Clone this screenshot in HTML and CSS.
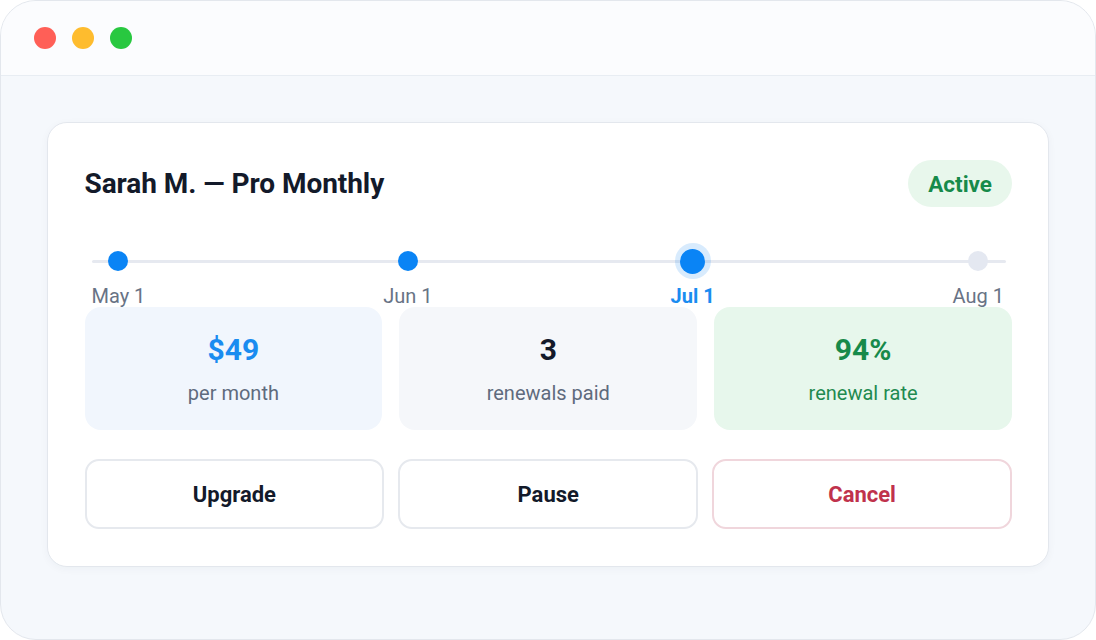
FILE: index.html
```html
<!DOCTYPE html>
<html lang="en">
<head>
<meta charset="utf-8">
<title>Subscription</title>
<link rel="stylesheet" href="styles.css">
</head>
<body>
<div class="window">
  <div class="titlebar">
    <span class="dot red"></span>
    <span class="dot yellow"></span>
    <span class="dot green"></span>
  </div>
  <div class="content">
    <div class="card">
      <div class="header">
        <h1 class="title">Sarah M. — Pro Monthly</h1>
        <span class="badge">Active</span>
      </div>
      <div class="timeline">
        <div class="track"></div>
        <div class="stop done"><span class="marker"></span><span class="label">May 1</span></div>
        <div class="stop done"><span class="marker"></span><span class="label">Jun 1</span></div>
        <div class="stop current"><span class="marker"></span><span class="label">Jul 1</span></div>
        <div class="stop future"><span class="marker"></span><span class="label">Aug 1</span></div>
      </div>
      <div class="stats">
        <div class="stat blue"><div class="value">$49</div><div class="caption">per month</div></div>
        <div class="stat gray"><div class="value">3</div><div class="caption">renewals paid</div></div>
        <div class="stat green"><div class="value">94%</div><div class="caption">renewal rate</div></div>
      </div>
      <div class="actions">
        <button class="btn">Upgrade</button>
        <button class="btn">Pause</button>
        <button class="btn danger">Cancel</button>
      </div>
    </div>
  </div>
</div>
</body>
</html>
```

FILE: styles.css
```css
* { box-sizing: border-box; }
html, body { margin: 0; padding: 0; }
body {
  width: 1096px;
  height: 640px;
  background: #ffffff;
  font-family: Roboto, "Liberation Sans", Arial, sans-serif;
  overflow: hidden;
}
.window {
  width: 1096px;
  height: 640px;
  border: 1.5px solid #e3e7ed;
  border-radius: 36px;
  background: #f5f8fc;
  overflow: hidden;
  display: flex;
  flex-direction: column;
}
.titlebar {
  height: 75px;
  flex: none;
  background: #fbfcfe;
  border-bottom: 1px solid #e8edf3;
  display: flex;
  align-items: center;
  gap: 16px;
  padding: 0 0 1px 33px;
}
.dot { width: 22px; height: 22px; border-radius: 50%; display: block; }
.dot.red { background: #ff5f57; }
.dot.yellow { background: #febc2e; }
.dot.green { background: #28c840; }
.content {
  padding: 46px 46px 0 45.5px;
}
.card {
  background: #ffffff;
  border: 1.5px solid #e3e7ed;
  border-radius: 20px;
  box-shadow: 0 2px 8px rgba(20, 40, 80, 0.04);
  padding: 37px 36px 37px 37px;
}
.header {
  display: flex;
  justify-content: space-between;
  align-items: center;
  height: 47px;
}
.title {
  margin: 0;
  font-size: 28px;
  font-weight: 700;
  color: #131a2a;
  letter-spacing: -0.05px;
}
.badge {
  display: inline-flex;
  align-items: center;
  justify-content: center;
  height: 47px;
  padding: 0 20px;
  border-radius: 24px;
  background: #e8f7ec;
  color: #168a4a;
  font-size: 22.5px;
  font-weight: 700;
}
.timeline {
  position: relative;
  display: flex;
  justify-content: space-between;
  margin: 36px 8px 0 7px;
}
.track {
  position: absolute;
  left: 0;
  right: -2px;
  top: 16.5px;
  height: 3.5px;
  border-radius: 2px;
  background: #e6e9f0;
}
.stop {
  position: relative;
  display: flex;
  flex-direction: column;
  align-items: center;
}
.marker {
  width: 36px;
  height: 36px;
  display: flex;
  align-items: center;
  justify-content: center;
}
.marker::before {
  content: "";
  display: block;
  width: 20px;
  height: 20px;
  border-radius: 50%;
  background: #0a84f5;
}
.stop.current .marker {
  border-radius: 50%;
  background: rgba(10, 132, 245, 0.16);
}
.stop.current .marker::before {
  width: 25px;
  height: 25px;
}
.stop.future .marker::before { background: #e4e8f1; }
.label {
  margin-top: 6px;
  line-height: 22px;
  font-size: 20px;
  color: #687385;
}
.stop.current .label {
  color: #1a8cf0;
  font-weight: 700;
}
.stats {
  display: grid;
  grid-template-columns: 1fr 1fr 1fr;
  gap: 17px;
  margin-top: 0;
}
.stat {
  height: 123px;
  border-radius: 16px;
  display: flex;
  flex-direction: column;
  align-items: center;
  justify-content: center;
}
.stat.blue { background: #f1f6fd; }
.stat.gray { background: #f5f7fa; }
.stat.green { background: #e7f7ec; }
.value {
  font-size: 30px;
  font-weight: 700;
  line-height: 32px;
  color: #131a2a;
}
.stat.blue .value { color: #1a8cf0; }
.stat.green .value { color: #168a4a; }
.caption {
  margin-top: 16px;
  font-size: 20px;
  line-height: 22px;
  color: #5f6b7d;
}
.stat.green .caption { color: #1f8a50; }
.actions {
  display: grid;
  grid-template-columns: 1fr 1fr 1fr;
  gap: 14px;
  margin-top: 29px;
}
.btn {
  height: 70px;
  border: 2px solid #e6e9ee;
  border-radius: 14px;
  background: #ffffff;
  font-family: inherit;
  font-size: 22px;
  font-weight: 700;
  color: #131a2a;
  cursor: pointer;
}
.btn.danger {
  border-color: #f0d6dc;
  color: #c0324c;
}
```
